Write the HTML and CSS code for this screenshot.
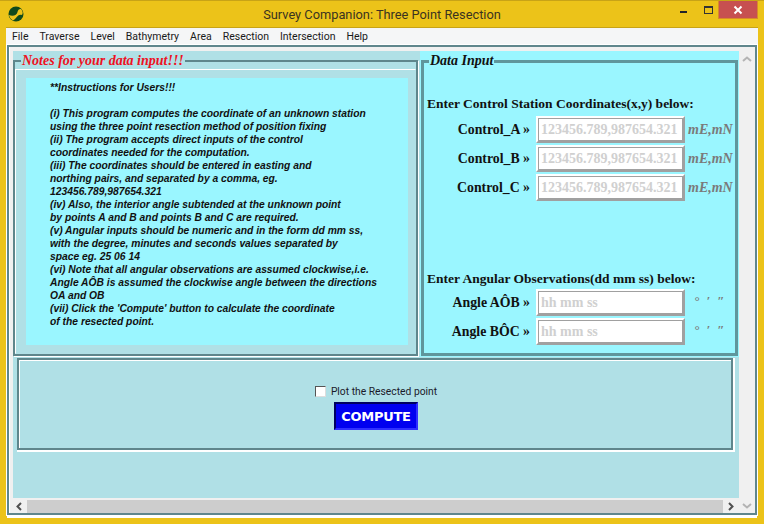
FILE: index.html
```html
<!DOCTYPE html>
<html lang="en">
<head>
<meta charset="utf-8">
<title>Survey Companion: Three Point Resection</title>
<link rel="stylesheet" href="styles.css">
</head>
<body>
<div class="window">
  <header class="titlebar">
    <svg class="logo" width="16" height="16" viewBox="0 0 16 16"><circle cx="8" cy="8" r="7.5" fill="#0f4a1c"/><path d="M1 9C5 11 9 9 9.500 6C10 3.500 12 2.500 13.500 3.500C15 6 15 7 14 9C10 7.500 9 12 5 14.500C3 13.500 1.500 11.500 1 9Z" fill="#ecc319"/></svg>
    <div class="title">Survey Companion: Three Point Resection</div>
    <div class="controls">
      <span class="min"></span>
      <span class="max"></span>
      <span class="close"><svg width="10" height="10" viewBox="0 0 10 10"><path d="M1.500 1.500L8.500 8.500M8.500 1.500L1.500 8.500" stroke="#fff" stroke-width="2"/></svg></span>
    </div>
  </header>
  <nav class="menu">
    <span>File</span><span>Traverse</span><span>Level</span><span>Bathymetry</span><span>Area</span><span>Resection</span><span>Intersection</span><span>Help</span>
  </nav>
  <div class="client">
    <div class="viewport">
      <div class="upper">
        <div class="left-cell">
          <fieldset class="notes">
            <legend>Notes for your data input!!!</legend>
            <div class="notebox">
              <p>**Instructions for Users!!!<br><br>(i) This program computes the coordinate of an unknown station<br>using the three point resection method of position fixing<br>(ii) The program accepts direct inputs of the control<br>coordinates needed for the computation.<br>(iii) The coordinates should be entered in easting and<br>northing pairs, and separated by a comma, eg.<br>123456.789,987654.321<br>(iv) Also, the interior angle subtended at the unknown point<br>by points A and B and points B and C are required.<br>(v) Angular inputs should be numeric and in the form dd mm ss,<br>with the degree, minutes and seconds values separated by<br>space eg. 25 06 14<br>(vi) Note that all angular observations are assumed clockwise,i.e.<br>Angle AÔB is assumed the clockwise angle between the directions<br>OA and OB<br>(vii) Click the 'Compute' button to calculate the coordinate<br>of the resected point.</p>
            </div>
          </fieldset>
        </div>
        <div class="right-cell">
          <fieldset class="data">
            <legend>Data Input</legend>
            <h2 class="h-coords">Enter Control Station Coordinates(x,y) below:</h2>
            <div class="row"><label>Control_A »</label><input type="text" placeholder="123456.789,987654.321"><em>mE,mN</em></div>
            <div class="row"><label>Control_B »</label><input type="text" placeholder="123456.789,987654.321"><em>mE,mN</em></div>
            <div class="row"><label>Control_C »</label><input type="text" placeholder="123456.789,987654.321"><em>mE,mN</em></div>
            <h2 class="h-angles">Enter Angular Observations(dd mm ss) below:</h2>
            <div class="row"><label>Angle AÔB »</label><input type="text" placeholder="hh mm ss"><i class="marks">° ′ ″</i></div>
            <div class="row"><label>Angle BÔC »</label><input type="text" placeholder="hh mm ss"><i class="marks">° ′ ″</i></div>
          </fieldset>
        </div>
      </div>
      <div class="actions">
        <label class="check"><input type="checkbox"><span>Plot the Resected point</span></label>
        <button type="button" class="compute">COMPUTE</button>
      </div>
    </div>
    <div class="vbar">
      <svg width="10" height="6" viewBox="0 0 10 6"><path d="M1 5L5 1.500L9 5" fill="none" stroke="#b4b4b4" stroke-width="2"/></svg>
      <svg width="10" height="6" viewBox="0 0 10 6"><path d="M1 1L5 4.500L9 1" fill="none" stroke="#b4b4b4" stroke-width="2"/></svg>
    </div>
    <div class="hbar">
      <svg class="arrow" width="6" height="9" viewBox="0 0 6 9"><path d="M5 1L1.500 4.500L5 8" fill="none" stroke="#505050" stroke-width="2"/></svg>
      <div class="thumb"></div>
      <svg class="arrow" width="6" height="9" viewBox="0 0 6 9"><path d="M1 1L4.500 4.500L1 8" fill="none" stroke="#505050" stroke-width="2"/></svg>
    </div>
  </div>
</div>
</body>
</html>
```

FILE: styles.css
```css
* { box-sizing: border-box; }
html, body { margin: 0; height: 100%; overflow: hidden; }
body { background: #ecc319; }
.window { width: 764px; height: 524px; display: flex; flex-direction: column; padding: 0 7px 9px; border-top: 1px solid #c8a316; }
.titlebar { height: 26px; flex: none; margin: 0 -1px; display: flex; align-items: center; justify-content: center; position: relative; }
.logo { position: absolute; left: 2px; top: 5px; }
.title { font: 12.800px "Roboto", sans-serif; color: #3a3320; margin-top: 1px; }
.controls { position: absolute; right: 0; top: 0; height: 18px; display: flex; }
.min { position: absolute; right: 71px; top: 10px; width: 7px; height: 2px; background: #20232a; }
.max { position: absolute; right: 45px; top: 5px; width: 9px; height: 8px; border: 1px solid #333; border-top-width: 2px; }
.close { width: 40px; height: 18px; background: #c75050; border: solid #d98a2a; border-width: 0 1px 1px; display: flex; align-items: center; justify-content: center; }
.menu { height: 18px; flex: none; margin: 0 -1px; background: #f5f6f7; border-top: 1px solid #c8a316; border-bottom: 1px solid #b4d2e6; display: flex; gap: 11px; padding: 0 6px; align-items: center; font: 10.500px "Roboto", sans-serif; color: #1a1a1a; }
.client { flex: 1; min-height: 0; display: grid; grid-template-columns: 1fr 16px; grid-template-rows: 1fr 15px; border: 2px solid #5f868c; padding: 4px 0 0 4px; background: #f0f0f0; box-shadow: 0 0 0 1px #fff, 0 3px 0 #fff, inset 1px 0 0 #fff; }
.viewport { background: #b0e0e6; display: flex; flex-direction: column; min-height: 0; overflow: hidden; }
.upper { display: flex; height: 306px; flex: none; }
.left-cell { width: 407px; flex: none; padding: 2px 2px 0 0; }
.right-cell { flex: 1; background: #9af6ff; padding: 2px 1px 0 1px; }
fieldset { margin: 0; min-width: 0; position: relative; }
.notes { height: 303px; border: 2px solid #5f868c; padding: 9px 8px 8px 11px; box-shadow: 1px 1px 0 #fff; }
.notes::before { content: ""; position: absolute; inset: 0; border: 1px solid #fff; border-right-color: transparent; border-bottom-color: transparent; }
.notes legend { position: relative; z-index: 1; background: #b0e0e6; font: italic bold 14px "Liberation Serif", serif; color: #ee1122; padding: 0 1px; margin-left: -5px; }
.notebox { position: relative; background: #9af6ff; height: 267px; padding: 3px 0 0 24px; }
.notebox p { margin: 0; font: italic bold 10.300px/13px "Liberation Sans", sans-serif; color: #111; }
.data { height: 303px; border: 3px solid #5f969c; padding: 0 0 0 3px; }
.data legend { font: italic bold 14px "Liberation Serif", serif; color: #111; padding: 0 1px; margin-left: 2px; }
h2 { margin: 0; font: bold 13.500px/16px "Liberation Serif", serif; color: #111; }
.h-coords { margin-top: 27px; margin-bottom: 3px; }
.h-angles { margin-top: 69px; margin-bottom: 1px; }
.row { height: 29px; display: flex; align-items: center; font: bold 13.800px "Liberation Serif", serif; color: #111; }
.row label { width: 103px; text-align: right; margin-right: 6px; }
.row input { width: 149px; height: 27px; padding: 0 2px; border: 3px solid; border-color: #fff #a0a0a0 #a0a0a0 #fff; outline: 1px solid #a0a0a0; outline-offset: -3px; background: #fff; font: bold 14px "Liberation Serif", serif; color: #111; }
.row input::placeholder { color: #d0d0d0; opacity: 1; }
.row em { margin-left: 3px; color: #7a7a7a; font: italic bold 14px "Liberation Serif", serif; }
.marks { margin-left: 9px; color: #7a7a7a; font: italic bold 13px "Liberation Serif", serif; letter-spacing: 1.500px; word-spacing: 1px; margin-top: -4px; }
.actions { margin: 1px 6px 0 4px; height: 92px; border: 2px solid #5f868c; box-shadow: 1px 1px 0 1px #fff, inset 1px 1px 0 #fff; display: flex; flex-direction: column; align-items: center; padding: 25px 0 0 2px; gap: 4px; }
.check { display: flex; align-items: center; gap: 5px; font: 10.300px "Roboto", sans-serif; color: #1a1a2a; }
.check input { margin: 0; width: 11px; height: 11px; appearance: none; background: #fff; border: 1px solid; border-color: #555 #ddd #ddd #555; }
.compute { width: 84px; height: 28px; padding: 0; background: #0000f0; color: #fff; border: 2px solid; border-color: #000060 #3030ff #3030ff #000060; font: bold 13px "DejaVu Sans", sans-serif; letter-spacing: -0.300px; }
.vbar { background: #f0f0f0; display: flex; flex-direction: column; justify-content: space-between; align-items: center; padding: 5px 0 4px; grid-row: 1 / 3; grid-column: 2; }
.hbar { background: #f0f0f0; display: flex; align-items: center; padding: 2px 0 0; margin-left: -2px; }
.arrow { flex: none; margin: 0 5px; }
.thumb { flex: 1; align-self: stretch; background: #cdcdcd; }
```
